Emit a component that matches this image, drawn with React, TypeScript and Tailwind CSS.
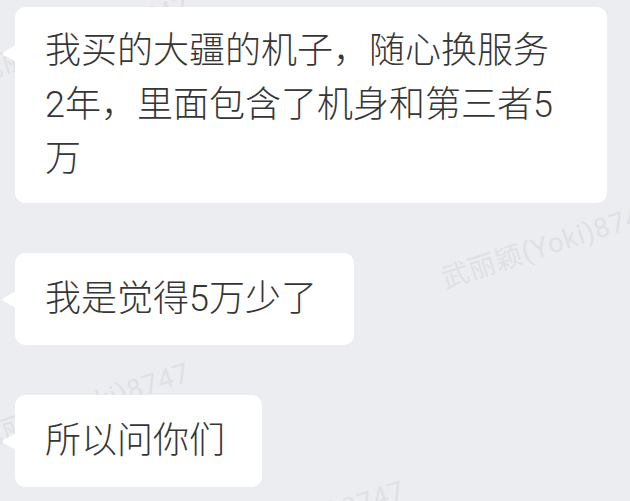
import React from "react";

const Tail = () => (
  <svg
    className="absolute left-[-14px] top-[38px]"
    width="15"
    height="17"
    viewBox="0 0 15 17"
  >
    <path d="M15 0 L2.2 7.2 Q0.6 8.5 2.2 9.8 L15 17 Z" fill="#ffffff" />
  </svg>
);

const Watermark = ({ className }: { className: string }) => (
  <div
    className={
      "absolute whitespace-nowrap text-[27px] tracking-[1px] leading-none text-[#dfe0e4] origin-bottom-left rotate-[-18deg] " +
      className
    }
    style={{ fontFamily: 'Roboto, "Noto Sans CJK SC", sans-serif' }}
  >
    武丽颖(Yoki)8747
  </div>
);

const Bubble = ({ text, className = "" }: { text: string; className?: string }) => (
  <div
    className={
      "relative rounded-[10px] bg-white pl-[30px] text-[36px] leading-[54px] font-light " +
      className
    }
  >
    <Tail />
    {text}
  </div>
);

export default function App() {
  return (
    <div
      className="relative w-[630px] h-[501px] overflow-hidden bg-[#ecedf1] text-[#363636]"
      style={{ fontFamily: 'Roboto, "Noto Sans CJK SC", sans-serif' }}
    >
      <Watermark className="left-[-20px] top-[60px]" />
      <Watermark className="left-[-20px] top-[427px]" />
      <Watermark className="left-[447px] top-[266px]" />
      <Watermark className="left-[195px] top-[545px]" />

      <div className="relative flex flex-col items-start gap-[50px] pt-[7px] pl-[15px]">
        <Bubble
          className="w-[592px] pr-[48px] py-[17px]"
          text="我买的大疆的机子，随心换服务2年，里面包含了机身和第三者5万"
        />
        <Bubble className="pr-[37px] py-[19px]" text="我是觉得5万少了" />
        <Bubble className="pr-[37px] py-[19px]" text="所以问你们" />
      </div>
    </div>
  );
}
